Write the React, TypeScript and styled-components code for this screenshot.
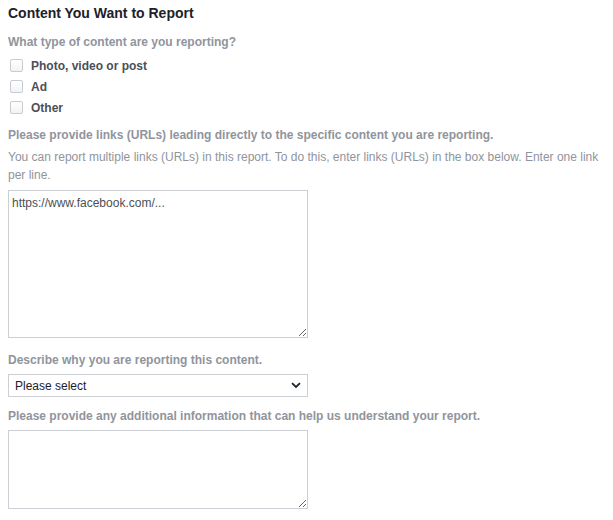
import styled, { createGlobalStyle } from "styled-components";

const GlobalStyle = createGlobalStyle`
  body {
    margin: 0;
    background: #ffffff;
    font-family: "Liberation Sans", Arial, sans-serif;
  }
`;

const Form = styled.div`
  padding: 4px 8px 0 8px;
  width: 597px;
  display: flex;
  flex-direction: column;
`;

const Title = styled.div`
  font-size: 14px;
  line-height: 18px;
  font-weight: bold;
  color: #1d2129;
`;

const Label = styled.div<{ top: number }>`
  font-size: 12px;
  line-height: 16px;
  font-weight: bold;
  color: #90949c;
  margin-top: ${(props) => props.top}px;
`;

const Hint = styled.div`
  font-size: 12px;
  line-height: 18px;
  color: #90949c;
  margin-top: 5px;
`;

const Options = styled.div`
  display: flex;
  flex-direction: column;
  margin-top: 5px;
`;

const Option = styled.label`
  display: flex;
  align-items: center;
  height: 21px;
  font-size: 12px;
  font-weight: bold;
  color: #4b4f56;
  cursor: pointer;
`;

const Check = styled.input`
  appearance: none;
  width: 13px;
  height: 13px;
  margin: 0 8px 0 2px;
  border: 1px solid #c8ccd2;
  border-radius: 2px;
  background: linear-gradient(#ffffff, #f2f3f5);
  box-sizing: border-box;
`;

const Area = styled.textarea<{ h: number }>`
  width: 300px;
  height: ${(props) => props.h}px;
  box-sizing: border-box;
  border: 1px solid #ccd0d5;
  padding: 5px 3px;
  font-family: "Liberation Sans", Arial, sans-serif;
  font-size: 12px;
  line-height: 14px;
  color: #4b4f56;
  resize: vertical;
  outline: none;
  &::placeholder {
    color: #4b4f56;
  }
`;

const Gap = styled.div<{ h: number }>`
  height: ${(props) => props.h}px;
`;

const SelectWrap = styled.div`
  position: relative;
  width: 300px;
  margin-top: 6px;
`;

const Select = styled.select`
  appearance: none;
  width: 300px;
  height: 23px;
  box-sizing: border-box;
  border: 1px solid #ccd0d5;
  background: #ffffff;
  padding: 0 6px;
  font-family: "Liberation Sans", Arial, sans-serif;
  font-size: 12px;
  color: #1d2129;
  border-radius: 0;
  outline: none;
`;

const Chevron = styled.svg`
  position: absolute;
  right: 7px;
  top: 8px;
  pointer-events: none;
`;

const App = () => {
  return (
    <>
      <GlobalStyle />
      <Form>
        <Title>Content You Want to Report</Title>
        <Label top={12}>What type of content are you reporting?</Label>
        <Options>
          <Option>
            <Check type="checkbox" />
            Photo, video or post
          </Option>
          <Option>
            <Check type="checkbox" />
            Ad
          </Option>
          <Option>
            <Check type="checkbox" />
            Other
          </Option>
        </Options>
        <Label top={9}>
          Please provide links (URLs) leading directly to the specific content you are reporting.
        </Label>
        <Hint>
          You can report multiple links (URLs) in this report. To do this, enter links (URLs) in
          the box below. Enter one link per line.
        </Hint>
        <Gap h={6} />
        <Area h={148} placeholder="https://www.facebook.com/..." />
        <Label top={14}>Describe why you are reporting this content.</Label>
        <SelectWrap>
          <Select defaultValue="">
            <option value="">Please select</option>
          </Select>
          <Chevron width="10" height="7" viewBox="0 0 10 7">
            <path d="M1 1.2 L5 5 L9 1.2" fill="none" stroke="#1d2129" strokeWidth="1.8" />
          </Chevron>
        </SelectWrap>
        <Label top={11}>
          Please provide any additional information that can help us understand your report.
        </Label>
        <Gap h={6} />
        <Area h={79} />
      </Form>
    </>
  );
};

export default App;
